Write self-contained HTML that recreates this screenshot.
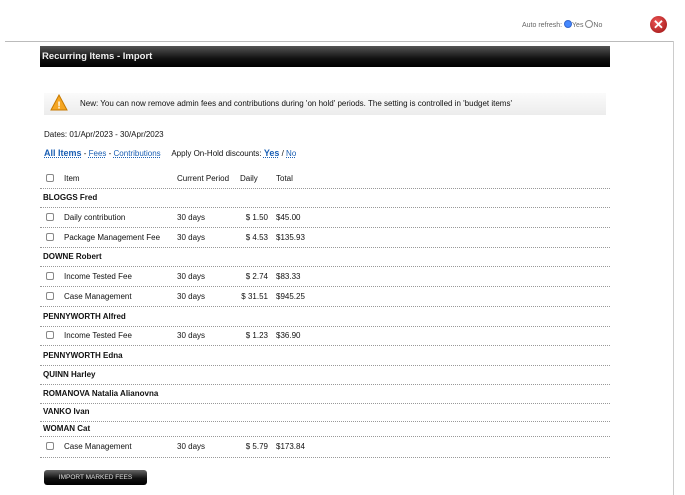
<!DOCTYPE html>
<html><head><style>
body{margin:0;width:685px;height:495px;background:#fff;font-family:"Liberation Sans",sans-serif;font-size:8px;color:#111;position:relative;overflow:hidden}
.a{position:absolute;white-space:nowrap}
.row{position:absolute;left:40px;width:570px;height:19px;border-bottom:1px dotted #999}
.row span{position:absolute;top:5px}
.cb{position:absolute;left:6px;top:5px;width:6px;height:6px;border:1px solid #888;border-radius:2px;background:#fff}
.b{font-weight:bold}
a{color:#1a5fb4;text-decoration:underline dotted}
</style></head><body>
<div class="a" style="left:522px;top:20px;color:#666;font-size:7px">Auto refresh: <span style="display:inline-block;width:6px;height:6px;border-radius:50%;border:1px solid #36c;background:#48f;vertical-align:-1px"></span>Yes <span style="display:inline-block;width:6px;height:6px;border-radius:50%;border:1px solid #888;vertical-align:-1px"></span>No</div>
<div class="a" style="left:650px;top:16px;width:17px;height:17px;border-radius:50%;background:radial-gradient(circle at 40% 35%,#e55,#911);color:#fff;font-size:13px;line-height:17px;text-align:center;font-weight:bold">✕</div>
<div class="a" style="left:5px;top:41px;width:668px;height:1px;background:#bbb"></div>
<div class="a" style="left:673px;top:41px;width:1px;height:454px;background:#ccc"></div>
<div class="a" style="left:40px;top:46px;width:568px;height:21px;background:linear-gradient(#555,#111 60%,#000);color:#eee;font-weight:bold;font-size:9.5px;line-height:21px;padding-left:2px">Recurring Items - Import</div>
<div class="a" style="left:44px;top:93px;width:562px;height:22px;background:linear-gradient(#fbfbfb,#ececec)"></div>
<svg class="a" style="left:50px;top:94px" width="18" height="18"><path d="M9 1 L17 16 L1 16 Z" fill="#f5a623" stroke="#c77a00" stroke-width="1"/><text x="9" y="14.5" font-size="10" font-weight="bold" text-anchor="middle" fill="#fff" font-family="Liberation Sans">!</text></svg>
<div class="a" style="left:80px;top:99px">New: You can now remove admin fees and contributions during 'on hold' periods. The setting is controlled in 'budget items'</div>
<div class="a" style="left:44px;top:130px">Dates: 01/Apr/2023 - 30/Apr/2023</div>
<div class="a" style="left:44px;top:148px"><a style="font-size:9px;font-weight:bold">All Items</a> - <a>Fees</a> - <a>Contributions</a> &nbsp;&nbsp;&nbsp; Apply On-Hold discounts: <a style="font-size:9px;font-weight:bold">Yes</a> / <a>No</a></div>
<div class="row" style="top:169px"><div class="cb"></div><span style="left:24px">Item</span><span style="left:137px">Current Period</span><span style="left:200px">Daily</span><span style="left:236px">Total</span></div>
<div class="row" style="top:188px"><span class="b" style="left:3px">BLOGGS Fred</span></div>
<div class="row" style="top:208px"><div class="cb"></div><span style="left:24px">Daily contribution</span><span style="left:137px">30 days</span><span style="left:200px;width:28px;text-align:right">$ 1.50</span><span style="left:236px">$45.00</span></div>
<div class="row" style="top:228px"><div class="cb"></div><span style="left:24px">Package Management Fee</span><span style="left:137px">30 days</span><span style="left:200px;width:28px;text-align:right">$ 4.53</span><span style="left:236px">$135.93</span></div>
<div class="row" style="top:247px"><span class="b" style="left:3px">DOWNE Robert</span></div>
<div class="row" style="top:267px"><div class="cb"></div><span style="left:24px">Income Tested Fee</span><span style="left:137px">30 days</span><span style="left:200px;width:28px;text-align:right">$ 2.74</span><span style="left:236px">$83.33</span></div>
<div class="row" style="top:287px"><div class="cb"></div><span style="left:24px">Case Management</span><span style="left:137px">30 days</span><span style="left:196px;width:32px;text-align:right">$ 31.51</span><span style="left:236px">$945.25</span></div>
<div class="row" style="top:307px"><span class="b" style="left:3px">PENNYWORTH Alfred</span></div>
<div class="row" style="top:326px"><div class="cb"></div><span style="left:24px">Income Tested Fee</span><span style="left:137px">30 days</span><span style="left:200px;width:28px;text-align:right">$ 1.23</span><span style="left:236px">$36.90</span></div>
<div class="row" style="top:346px"><span class="b" style="left:3px">PENNYWORTH Edna</span></div>
<div class="row" style="top:365px"><span class="b" style="left:3px">QUINN Harley</span></div>
<div class="row" style="top:384px"><span class="b" style="left:3px">ROMANOVA Natalia Alianovna</span></div>
<div class="row" style="top:402px"><span class="b" style="left:3px">VANKO Ivan</span></div>
<div class="row" style="top:419px;height:17px"><span class="b" style="left:3px">WOMAN Cat</span></div>
<div class="row" style="top:437px;height:20px"><div class="cb"></div><span style="left:24px">Case Management</span><span style="left:137px">30 days</span><span style="left:200px;width:28px;text-align:right">$ 5.79</span><span style="left:236px">$173.84</span></div>
<div class="a" style="left:44px;top:470px;width:103px;height:15px;border-radius:3px;background:linear-gradient(#666,#111 55%,#000);color:#ddd;font-size:6.5px;line-height:15px;text-align:center">IMPORT MARKED FEES</div>
</body></html>
